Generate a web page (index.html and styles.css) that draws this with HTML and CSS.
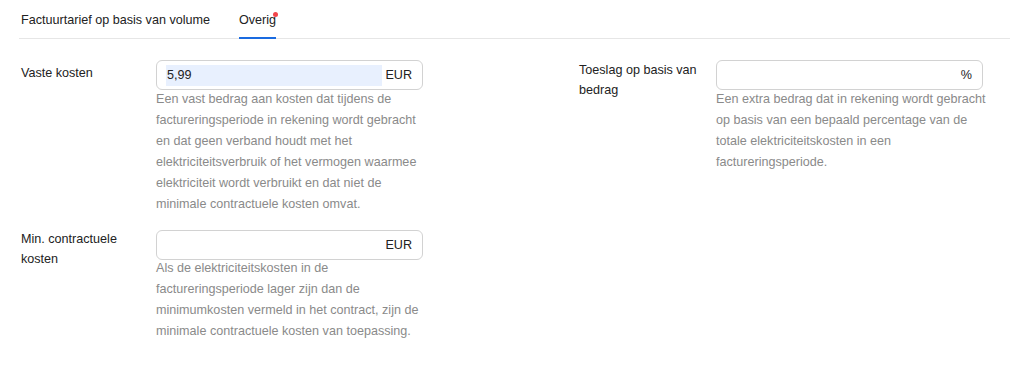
FILE: index.html
```html
<!DOCTYPE html>
<html lang="nl">

<head>
    <meta charset="UTF-8">
    <meta name="viewport" content="width=device-width, initial-scale=1.0">
    <title>Overig</title>
    <link rel="stylesheet" href="styles.css">
</head>

<body>
    <div class="page">
        <div class="tabs">
            <div class="tab">Factuurtarief op basis van volume</div>
            <div class="tab active">Overig<span class="dot"></span></div>
        </div>

        <div class="form">
            <div class="field">
                <div class="label">Vaste kosten</div>
                <div class="control">
                    <div class="input-box">
                        <span class="value filled">5,99</span>
                        <span class="unit">EUR</span>
                    </div>
                    <div class="desc">
                        Een vast bedrag aan kosten dat tijdens de<br>
                        factureringsperiode in rekening wordt gebracht<br>
                        en dat geen verband houdt met het<br>
                        elektriciteitsverbruik of het vermogen waarmee<br>
                        elektriciteit wordt verbruikt en dat niet de<br>
                        minimale contractuele kosten omvat.
                    </div>
                </div>
            </div>

            <div class="field">
                <div class="label multi wide">Toeslag op basis van bedrag</div>
                <div class="control">
                    <div class="input-box">
                        <span class="value"></span>
                        <span class="unit">%</span>
                    </div>
                    <div class="desc">
                        Een extra bedrag dat in rekening wordt gebracht<br>
                        op basis van een bepaald percentage van de<br>
                        totale elektriciteitskosten in een<br>
                        factureringsperiode.
                    </div>
                </div>
            </div>

            <div class="field">
                <div class="label multi top">Min. contractuele kosten</div>
                <div class="control">
                    <div class="input-box">
                        <span class="value"></span>
                        <span class="unit">EUR</span>
                    </div>
                    <div class="desc tight">
                        Als de elektriciteitskosten in de<br>
                        factureringsperiode lager zijn dan de<br>
                        minimumkosten vermeld in het contract, zijn de<br>
                        minimale contractuele kosten van toepassing.
                    </div>
                </div>
            </div>
        </div>
    </div>
</body>

</html>
```

FILE: styles.css
```css
body {
    margin: 0;
    background: #fff;
    font-family: 'Liberation Sans', Arial, sans-serif;
    font-size: 12.6px;
    color: #222;
}

.page {
    padding-left: 19px;
}

.tabs {
    display: flex;
    gap: 29px;
    padding-left: 2px;
    border-bottom: 1px solid #e6e6e6;
}

.tab {
    position: relative;
    padding: 12px 0 9px;
    line-height: 16px;
    border-bottom: 2px solid transparent;
    margin-bottom: -1px;
    color: #222;
}

.tab.active {
    border-bottom-color: #1a6be0;
}

/* small red marker next to the tab title */
.dot {
    position: absolute;
    top: 12px;
    right: -2px;
    width: 5px;
    height: 5px;
    border-radius: 50%;
    background: #f2464b;
}

.form {
    display: grid;
    grid-template-columns: 558px 1fr;
    row-gap: 15px;
    padding-left: 2px;
    margin-top: 21px;
}

.field {
    display: flex;
    align-items: flex-start;
}

.label {
    width: 135px;
    flex-shrink: 0;
    padding: 3px 12px 0 0;
    box-sizing: border-box;
    line-height: 20px;
    color: #222;
}

.label.wide {
    width: 137px;
}

.label.multi {
    padding-top: 0;
}

.label.top {
    margin-top: -1px;
}

.control {
    width: 267px;
}

.input-box {
    display: flex;
    align-items: center;
    height: 30px;
    box-sizing: border-box;
    border: 1px solid #d2d2d2;
    border-radius: 6px;
    padding: 0 10px 0 9px;
}

.value {
    flex: 1;
    height: 21px;
    line-height: 21px;
    padding-left: 1px;
    margin-right: 3px;
    color: #222;
}

.value.filled {
    background: #e8f0fe;
}

.unit {
    color: #222;
}

.desc {
    margin-top: -1px;
    line-height: 21px;
    color: #8a8a8a;
    white-space: nowrap;
}

.desc.tight {
    margin-top: -2px;
}
```
